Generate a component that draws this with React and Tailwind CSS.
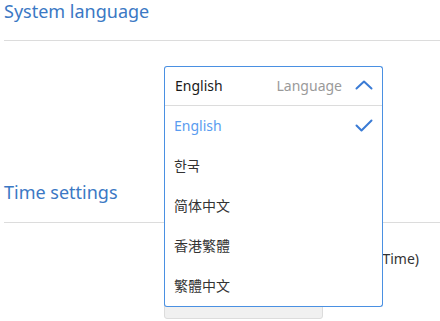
import React, { useState } from 'react';

const languages = ['English', '한국', '简体中文', '香港繁體', '繁體中文'];

const ChevronUp = () => (
  <svg width="18" height="10" viewBox="0 0 18 10" fill="none">
    <path d="M1.5 8.5 L9 1.5 L16.5 8.5" stroke="#3a7bd5" strokeWidth="2" strokeLinecap="round" strokeLinejoin="round" />
  </svg>
);

const Check = () => (
  <svg width="18" height="14" viewBox="0 0 18 14" fill="none">
    <path d="M1.5 6.5 L6.5 11.5 L16.5 1.5" stroke="#3a7bd5" strokeWidth="2" strokeLinecap="round" strokeLinejoin="round" />
  </svg>
);

const LanguageSelect = () => {
  const [value, setValue] = useState('English');

  return (
    <div className="relative w-[219px]">
      <div className="flex h-[39px] items-center rounded-t-[3px] border border-b-0 border-[#4a90e2] pb-[2px] pl-[10px] pr-[9px]">
        <span className="text-[14px] text-[#1a1a1a]">{value}</span>
        <span className="ml-auto text-[14px] text-[#9a9a9a]">Language</span>
        <span className="ml-[13px] flex items-center">
          <ChevronUp />
        </span>
      </div>
      <div className="absolute left-0 top-full z-10 w-full rounded-b-[3px] border border-t-0 border-[#4a90e2] bg-white">
        <div className="h-px bg-[#dcdcdc]" />
        {languages.map(lang => (
          <div
            key={lang}
            onClick={() => setValue(lang)}
            className={
              lang === value
                ? 'flex h-[40px] items-center pb-[2px] pl-[9px] pr-[9px] text-[14px] text-[#5a9cf0]'
                : 'flex h-[40px] items-center pb-[2px] pl-[9px] pr-[9px] text-[14px] text-[#333333]'
            }
          >
            <span>{lang}</span>
            {lang === value && (
              <span className="ml-auto flex items-center pt-[1px]">
                <Check />
              </span>
            )}
          </div>
        ))}
      </div>
    </div>
  );
};

const App = () => {
  return (
    <div
      className="h-[321px] w-[440px] overflow-hidden bg-white pl-1"
      style={{ fontFamily: '"Noto Sans", "Noto Sans CJK SC", "Noto Sans CJK TC", "Noto Sans CJK KR", sans-serif' }}
    >
      <h2 className="h-[22px] text-[18px] leading-[22px] text-[#3b78c4]">System language</h2>
      <div className="mt-[18px] h-px bg-[#dcdcdc]" />
      <div className="flex pl-[160px] pt-[25px]">
        <LanguageSelect />
      </div>

      <h2 className="mt-[76px] h-[22px] text-[18px] leading-[22px] text-[#3b78c4]">Time settings</h2>
      <div className="mt-[19px] h-px bg-[#dcdcdc]" />
      <div className="flex pl-[160px] pt-[26px]">
        <div className="flex w-[255px] justify-end overflow-hidden whitespace-nowrap text-[14px] leading-[20px] text-[#333333]">
          (UTC+08:00) Beijing (China Standard Time)
        </div>
      </div>
      <div className="flex pl-[160px] pt-[22px]">
        <div className="h-[28px] w-[159px] rounded-[3px] border border-[#dcdcdc] bg-[#f0f0f0]" />
      </div>
    </div>
  );
};

export default App;
